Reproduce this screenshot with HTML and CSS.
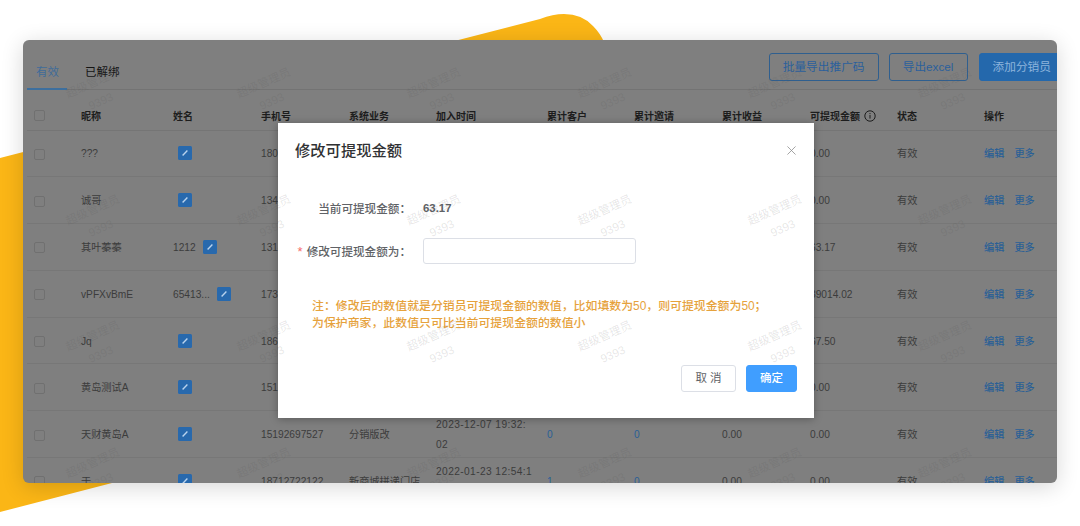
FILE: index.html
```html
<!DOCTYPE html>
<html lang="zh-CN">

<head>
    <meta charset="UTF-8">
    <title>修改可提现金额</title>
    <link rel="stylesheet" href="styles.css">
</head>

<body>
    <svg class="backdrop" width="1080" height="526" viewBox="0 0 1080 526">
        <path fill="#fbb616" d="M0 158 L540 19 Q553 14 564 14 Q582 14 593 26 Q600 33 604 42 L604 300 L112 483 L0 512 Z" />
    </svg>

    <div class="window">
        <div class="toolbar">
            <div class="tabs">
                <span class="tab tab-active">有效</span>
                <span class="tab">已解绑</span>
            </div>
            <div class="actions">
                <span class="btn btn-plain">批量导出推广码</span>
                <span class="btn btn-plain btn-excel">导出excel</span>
                <span class="btn btn-solid">添加分销员</span>
            </div>
        </div>

        <table class="list">
            <colgroup>
                <col class="c-check"><col class="c-nick"><col class="c-std"><col class="c-std"><col class="c-biz">
                <col class="c-time"><col class="c-biz"><col class="c-std"><col class="c-std"><col class="c-biz"><col class="c-biz"><col>
            </colgroup>
            <thead>
                <tr>
                    <th><span class="check"></span></th>
                    <th>昵称</th><th>姓名</th><th>手机号</th><th>系统业务</th><th>加入时间</th>
                    <th>累计客户</th><th>累计邀请</th><th>累计收益</th>
                    <th>
                        <span class="with-info">可提现金额
                            <svg class="info" width="12" height="12" viewBox="0 0 12 12">
                                <circle cx="6" cy="6" r="5.2" fill="none" stroke="#1d1d1d" stroke-width="1" />
                                <path d="M6 5v3.6M6 3.1v1" fill="none" stroke="#1d1d1d" stroke-width="1" />
                            </svg>
                        </span>
                    </th>
                    <th>状态</th><th>操作</th>
                </tr>
            </thead>
            <tbody>
                <tr>
                    <td><span class="check"></span></td><td>???</td>
                    <td><span class="name"><svg class="edit edit-only" viewBox="0 0 14 14"><use href="#pen" /></svg></span></td>
                    <td>180</td><td></td><td></td><td></td><td></td><td></td><td>0.00</td><td>有效</td>
                    <td><a class="link">编辑</a><a class="link">更多</a></td>
                </tr>
                <tr>
                    <td><span class="check"></span></td><td>诚哥</td>
                    <td><span class="name"><svg class="edit edit-only" viewBox="0 0 14 14"><use href="#pen" /></svg></span></td>
                    <td>134</td><td></td><td></td><td></td><td></td><td></td><td>0.00</td><td>有效</td>
                    <td><a class="link">编辑</a><a class="link">更多</a></td>
                </tr>
                <tr>
                    <td><span class="check"></span></td><td>其叶蓁蓁</td>
                    <td><span class="name">1212<svg class="edit" viewBox="0 0 14 14"><use href="#pen" /></svg></span></td>
                    <td>1314</td><td></td><td></td><td></td><td></td><td></td><td>63.17</td><td>有效</td>
                    <td><a class="link">编辑</a><a class="link">更多</a></td>
                </tr>
                <tr>
                    <td><span class="check"></span></td><td>vPFXvBmE</td>
                    <td><span class="name">65413...<svg class="edit" viewBox="0 0 14 14"><use href="#pen" /></svg></span></td>
                    <td>173</td><td></td><td></td><td></td><td></td><td></td><td>39014.02</td><td>有效</td>
                    <td><a class="link">编辑</a><a class="link">更多</a></td>
                </tr>
                <tr>
                    <td><span class="check"></span></td><td>Jq</td>
                    <td><span class="name"><svg class="edit edit-only" viewBox="0 0 14 14"><use href="#pen" /></svg></span></td>
                    <td>186</td><td></td><td></td><td></td><td></td><td></td><td>67.50</td><td>有效</td>
                    <td><a class="link">编辑</a><a class="link">更多</a></td>
                </tr>
                <tr>
                    <td><span class="check"></span></td><td>黄岛测试A</td>
                    <td><span class="name"><svg class="edit edit-only" viewBox="0 0 14 14"><use href="#pen" /></svg></span></td>
                    <td>1519</td><td></td><td></td><td></td><td></td><td></td><td>0.00</td><td>有效</td>
                    <td><a class="link">编辑</a><a class="link">更多</a></td>
                </tr>
                <tr>
                    <td><span class="check"></span></td><td>天财黄岛A</td>
                    <td><span class="name"><svg class="edit edit-only" viewBox="0 0 14 14"><use href="#pen" /></svg></span></td>
                    <td>15192697527</td><td>分销版改</td><td class="time">2023-12-07 19:32:<br>02</td>
                    <td><a class="link">0</a></td><td><a class="link">0</a></td><td>0.00</td><td>0.00</td><td>有效</td>
                    <td><a class="link">编辑</a><a class="link">更多</a></td>
                </tr>
                <tr>
                    <td><span class="check"></span></td><td>于</td>
                    <td><span class="name"><svg class="edit edit-only" viewBox="0 0 14 14"><use href="#pen" /></svg></span></td>
                    <td>18712722122</td><td>新商城拼递门店</td><td class="time">2022-01-23 12:54:1<br>2</td>
                    <td><a class="link">1</a></td><td><a class="link">0</a></td><td>0.00</td><td>0.00</td><td>有效</td>
                    <td><a class="link">编辑</a><a class="link">更多</a></td>
                </tr>
            </tbody>
        </table>

        <div class="dialog">
            <div class="dialog-head">
                <span class="dialog-title">修改可提现金额</span>
                <svg class="close" width="9" height="9" viewBox="0 0 10 10">
                    <path d="M.5.5l9 9M9.5.5l-9 9" fill="none" stroke="#8f8f8f" stroke-width="0.9" />
                </svg>
            </div>
            <div class="form-row form-current">
                <span class="form-label">当前可提现金额：</span>
                <span class="form-value">63.17</span>
            </div>
            <div class="form-row form-edit">
                <span class="form-label"><i class="star">*</i>修改可提现金额为：</span>
                <span class="form-input"></span>
            </div>
            <p class="note">注：修改后的数值就是分销员可提现金额的数值，比如填数为50，则可提现金额为50；<br>为保护商家，此数值只可比当前可提现金额的数值小</p>
            <div class="dialog-foot">
                <span class="dlg-btn dlg-cancel">取 消</span>
                <span class="dlg-btn dlg-ok">确定</span>
            </div>
        </div>

        <div class="marks">
            <div class="mark">超级管理员<br>9393</div><div class="mark">超级管理员<br>9393</div><div class="mark">超级管理员<br>9393</div>
            <div class="mark">超级管理员<br>9393</div><div class="mark">超级管理员<br>9393</div><div class="mark">超级管理员<br>9393</div>
            <div class="mark">超级管理员<br>9393</div><div class="mark">超级管理员<br>9393</div><div class="mark">超级管理员<br>9393</div>
            <div class="mark">超级管理员<br>9393</div><div class="mark">超级管理员<br>9393</div><div class="mark">超级管理员<br>9393</div>
            <div class="mark">超级管理员<br>9393</div><div class="mark">超级管理员<br>9393</div><div class="mark">超级管理员<br>9393</div>
            <div class="mark">超级管理员<br>9393</div><div class="mark">超级管理员<br>9393</div><div class="mark">超级管理员<br>9393</div>
            <div class="mark">超级管理员<br>9393</div><div class="mark">超级管理员<br>9393</div><div class="mark">超级管理员<br>9393</div>
            <div class="mark">超级管理员<br>9393</div><div class="mark">超级管理员<br>9393</div><div class="mark">超级管理员<br>9393</div>
        </div>
    </div>

    <svg width="0" height="0" class="defs">
        <symbol id="pen" viewBox="0 0 14 14">
            <rect width="14" height="14" rx="1.5" fill="#2869ad" />
            <path d="M4.6 9.6l4.8-5" fill="none" stroke="#b9d3ee" stroke-width="1.4" />
        </symbol>
    </svg>
</body>

</html>
```

FILE: styles.css
```css
* {
    margin: 0;
    padding: 0;
    box-sizing: border-box;
}

body {
    font-family: "Liberation Sans", "Noto Sans CJK SC", sans-serif;
    background-color: #fff;
    width: 1080px;
    height: 526px;
    overflow: hidden;
    position: relative;
    padding: 40px 23px 0;
}

.backdrop {
    position: absolute;
    top: 0;
    left: 0;
}

.defs {
    position: absolute;
}

.window {
    position: relative;
    height: 443px;
    border-radius: 6px;
    overflow: hidden;
    background-color: #7f7f7f;
    box-shadow: 0 4px 22px rgba(0, 0, 0, 0.16);
}

/* tabs + buttons */
.toolbar {
    display: flex;
    justify-content: space-between;
    height: 50px;
    margin-left: 4px;
    border-bottom: 1px solid #737373;
}

.tabs {
    display: flex;
    gap: 18px;
}

.tab {
    height: 50px;
    padding: 24px 0 0;
    font-size: 11.5px;
    line-height: 16px;
    color: #141414;
}

.tab-active {
    width: 40px;
    padding-left: 9px;
    color: #3f6c99;
    border-bottom: 2px solid #3d6f9e;
}

.actions {
    display: flex;
    gap: 10px;
    padding-top: 13px;
    margin-right: -8px;
}

.btn {
    height: 28px;
    padding: 0 13px;
    font-size: 11.7px;
    line-height: 26px;
    border-radius: 3px;
    border: 1px solid #2f5f8f;
    white-space: nowrap;
}

.btn-plain {
    color: #2b5f9c;
}

.btn-excel {
    width: 79px;
    padding: 0;
    text-align: center;
}

.btn-solid {
    margin-left: 1px;
    color: #8db4dc;
    background-color: #2468ac;
    border-color: #2468ac;
}

/* table */
.list {
    width: 1030px;
    margin-left: 4px;
    table-layout: fixed;
    border-collapse: collapse;
    font-size: 10.2px;
    color: #3c3c3c;
}

.c-check {
    width: 54px;
}

.c-nick {
    width: 92px;
}

.c-std {
    width: 88px;
}

.c-biz {
    width: 87px;
}

.c-time {
    width: 111px;
}

th {
    height: 40px;
    padding-top: 12px;
    font-size: 10px;
    font-weight: 700;
    text-align: left;
    color: #1d1d1d;
    border-bottom: 1px solid #757575;
}

td {
    height: 46.8px;
    padding-top: 2px;
    line-height: 20px;
    border-bottom: 1px solid #777;
    white-space: nowrap;
}

th:first-child,
td:first-child {
    padding-left: 7px;
}

.time {
    letter-spacing: 0.4px;
}

.check {
    display: block;
    width: 11px;
    height: 11px;
    border: 1px solid #707070;
    border-radius: 2px;
}

.name {
    display: flex;
    align-items: center;
    gap: 7px;
}

.edit {
    width: 14px;
    height: 14px;
    margin-top: -2px;
}

.edit-only {
    margin-left: 5px;
}

.with-info {
    display: flex;
    align-items: center;
    gap: 4px;
}

.link {
    color: #2a5f96;
    font-weight: 500;
    margin-right: 10px;
}

/* dialog */
.dialog {
    position: absolute;
    top: 83px;
    left: 255px;
    width: 536px;
    height: 295px;
    padding: 0 17px;
    background-color: #fff;
    box-shadow: 0 1px 8px rgba(0, 0, 0, 0.3);
}

.dialog-head {
    display: flex;
    justify-content: space-between;
    align-items: center;
    height: 52px;
}

.dialog-title {
    font-size: 15.3px;
    font-weight: 500;
    color: #303133;
}

.close {
    margin: 3px 1px 0 0;
}

.form-row {
    display: flex;
    align-items: center;
    gap: 12px;
    margin-left: -17px;
    color: #606266;
    font-size: 11.6px;
}

.form-current {
    height: 20px;
    margin-top: 23px;
}

.form-edit {
    margin-top: 20px;
}

.form-label {
    width: 133px;
    text-align: right;
    font-weight: 500;
    white-space: nowrap;
}

.star {
    font-style: normal;
    font-size: 13px;
    color: #f56c6c;
    margin-right: 4px;
}

.form-value {
    font-weight: 700;
    font-size: 11.4px;
}

.form-input {
    width: 213px;
    height: 26px;
    border: 1px solid #dcdfe6;
    border-radius: 3px;
}

.note {
    margin: 34px 0 0 17px;
    font-size: 11.9px;
    font-weight: 500;
    line-height: 17px;
    color: #e6a23c;
    white-space: nowrap;
}

.dialog-foot {
    display: flex;
    justify-content: flex-end;
    gap: 10px;
    margin-top: 33px;
}

.dlg-btn {
    height: 27px;
    font-size: 11.5px;
    line-height: 25px;
    text-align: center;
    border: 1px solid #dcdfe6;
    border-radius: 3px;
    color: #606266;
}

.dlg-cancel {
    width: 55px;
}

.dlg-ok {
    width: 51px;
    color: #fff;
    font-weight: 500;
    background-color: #409eff;
    border-color: #409eff;
}

/* watermark sits over everything, dialog included */
.marks {
    position: absolute;
    top: -11px;
    left: -11px;
    display: grid;
    grid-template-columns: repeat(6, 170.4px);
    grid-auto-rows: 126.6px;
    pointer-events: none;
}

.mark {
    align-self: center;
    justify-self: center;
    transform: rotate(-24deg);
    font-size: 11.5px;
    line-height: 20px;
    text-align: center;
    color: rgba(80, 80, 80, 0.15);
}
```
